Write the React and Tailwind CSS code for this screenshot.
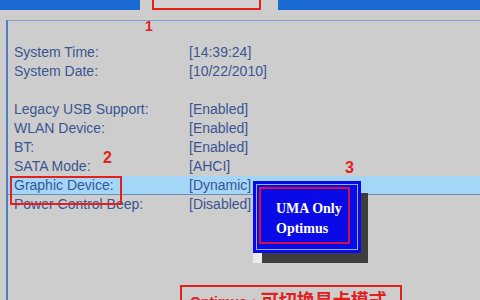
import React from 'react';

const rows = [
  { label: 'System Time:', value: '[14:39:24]' },
  { label: 'System Date:', value: '[10/22/2010]' },
  { label: '', value: '' },
  { label: 'Legacy USB Support:', value: '[Enabled]' },
  { label: 'WLAN Device:', value: '[Enabled]' },
  { label: 'BT:', value: '[Enabled]' },
  { label: 'SATA Mode:', value: '[AHCI]' },
  { label: 'Graphic Device:', value: '[Dynamic]', active: true },
  { label: 'Power Control Beep:', value: '[Disabled]' },
];

const App = () => {
  return (
    <div className="relative w-[480px] h-[300px] overflow-hidden bg-[#cdcdcd] font-['Liberation_Sans',sans-serif]">
      {/* tab bar */}
      <div className="flex h-[10px]">
        <div className="w-[140px] bg-[#1b6ad2]" />
        <div className="ml-[12px] w-[109px] border-2 border-t-0 border-[#e3201c] bg-[#d2d2d2]" />
        <div className="ml-[17px] flex-1 bg-[#1b6ad2]" />
      </div>

      {/* settings panel */}
      <div className="mt-[10px] ml-[6px] h-[290px] border-l-2 border-t border-l-[#4f7ec0] border-t-[#7f9fcc] pt-[22px]">
        {rows.map((row, i) => (
          <div
            key={i}
            className={
              row.active
                ? 'flex h-[19px] items-center pl-[6px] text-[14px] leading-[19px] text-[#3a5592] bg-[#a4d6f8] border-b border-[#6a90b4]'
                : 'flex h-[19px] items-center pl-[6px] text-[14px] leading-[19px] text-[#3a5592]'
            }
          >
            <span className="w-[175px]">{row.label}</span>
            <span>{row.value}</span>
          </div>
        ))}
      </div>

      {/* annotation 1 */}
      <div className="absolute left-[145px] top-[19px] text-[14px] font-bold leading-none text-[#e3201c]">1</div>

      {/* annotation 2 */}
      <div className="absolute left-[103px] top-[150px] text-[16px] font-bold leading-none text-[#e3201c]">2</div>
      <div className="absolute left-[10px] top-[176px] h-[29px] w-[112px] border-2 border-[#e3201c]" />

      {/* annotation 3 */}
      <div className="absolute left-[345px] top-[160px] text-[16px] font-bold leading-none text-[#e3201c]">3</div>

      {/* option popup */}
      <div className="absolute left-[262px] top-[193px] h-[70px] w-[106px] bg-[#3d3d3d]" />
      <div className="absolute left-[253px] top-[253px] h-[10px] w-[9px] bg-[#ebebeb]" />
      <div className="absolute left-[253px] top-[181px] h-[72px] w-[108px] bg-[#0a0ae6] p-[3px]">
        <div className="h-full w-full border border-[#8fb0ff] p-[2px]">
          <div className="flex h-[57px] w-[91px] flex-col justify-center border-2 border-[#d0104a] pl-[15px] pt-[6px] font-['Liberation_Serif',serif] text-[14px] font-bold leading-[20px] text-white">
            <span>UMA Only</span>
            <span>Optimus</span>
          </div>
        </div>
      </div>

      {/* bottom note */}
      <div className="absolute left-[180px] top-[285px] h-[30px] w-[222px] border-2 border-[#e3201c] pl-[8px] pt-[1px] font-bold leading-[22px] text-[#e3201c]">
        <span className="text-[14px]">Optimus：</span>
        <span className="font-['Noto_Sans_CJK_SC',sans-serif] text-[18px]">可切换显卡模式</span>
      </div>
    </div>
  );
};

export default App;
